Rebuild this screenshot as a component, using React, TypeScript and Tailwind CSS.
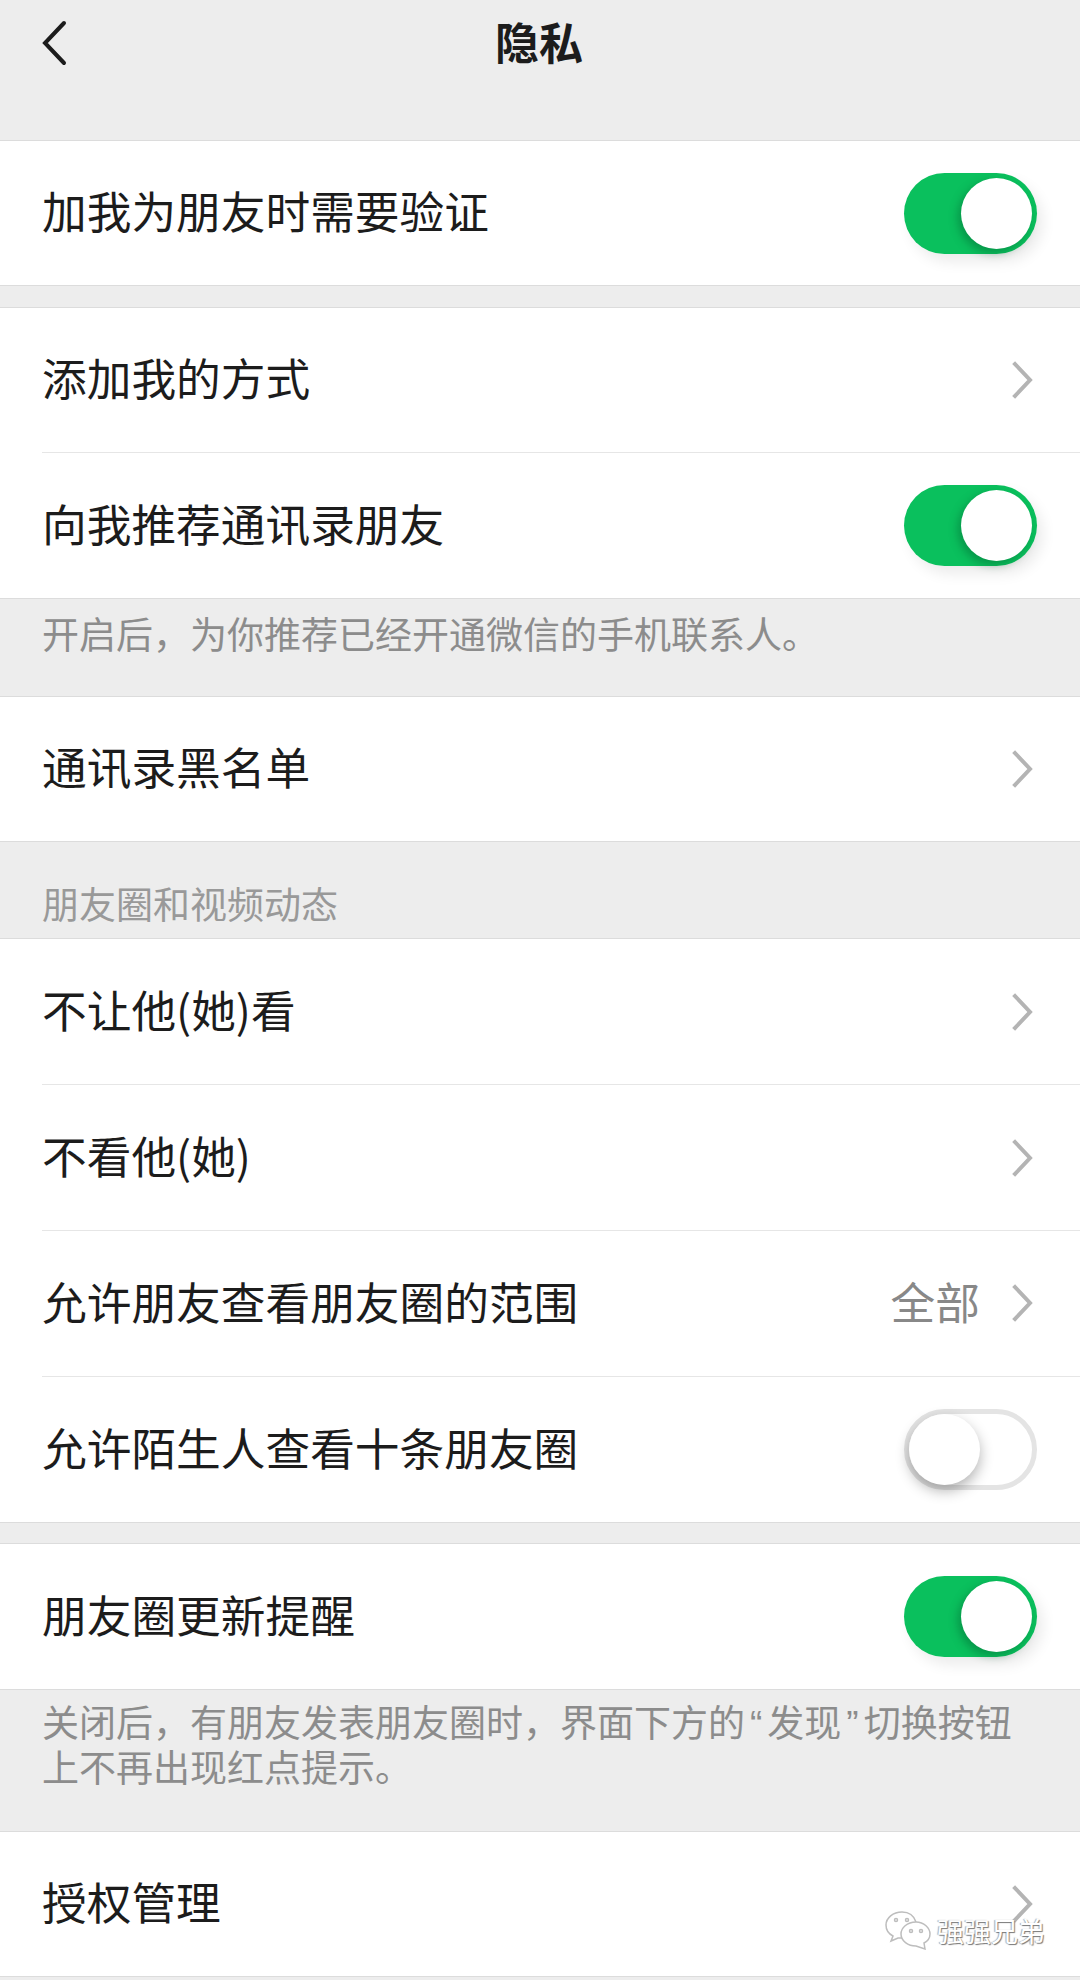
const FONT = "font-['Noto_Sans_CJK_SC','Noto_Sans',sans-serif]";

function Chevron() {
  return (
    <svg width="22" height="38" viewBox="0 0 22 38" className="block" fill="none">
      <path d="M3 3 L18 19 L3 35" stroke="#b4b4b4" strokeWidth="4" strokeLinecap="square" strokeLinejoin="miter" />
    </svg>
  );
}

function Toggle({ on }: { on: boolean }) {
  if (on) {
    return (
      <div className="relative w-[133px] h-[81px] rounded-full bg-[#0ac05d] shadow-[6px_8px_14px_rgba(0,0,0,0.08)]">
        <div className="absolute left-[57px] top-[5px] w-[71px] h-[71px] rounded-full bg-white shadow-[-3px_4px_10px_rgba(0,80,40,0.4)]" />
      </div>
    );
  }
  return (
    <div className="relative w-[133px] h-[81px] rounded-full border-[5px] border-[#e4e4e4] bg-white">
      <div className="absolute left-0 top-0 w-[71px] h-[71px] rounded-full bg-white shadow-[0_6px_14px_rgba(0,0,0,0.3)]" />
    </div>
  );
}

function Row({
  label,
  toggle,
  value,
  divider,
  height,
}: {
  label: string;
  toggle?: boolean;
  value?: string;
  divider?: boolean;
  height: string;
}) {
  return (
    <div className={`${height} pl-[42px]`}>
      <div className={`h-full flex items-center justify-between ${divider ? "border-b border-[#e6e6e6]" : ""}`}>
        <span className="text-[44.7px] leading-none text-[#1c1c1c] pb-[5px]">{label}</span>
        {toggle !== undefined ? (
          <div className="mr-[43px]">
            <Toggle on={toggle} />
          </div>
        ) : (
          <div className="flex items-center mr-[46px]">
            {value && <span className="text-[44.7px] leading-none text-[#888888] mr-[32px] pb-[5px]">{value}</span>}
            <Chevron />
          </div>
        )}
      </div>
    </div>
  );
}

function Section({ children }: { children: React.ReactNode }) {
  return <div className="bg-white border-y border-[#dcdcdc]">{children}</div>;
}

function Note({ children, className }: { children: React.ReactNode; className: string }) {
  return <div className={`px-[42px] text-[37px] leading-[45px] whitespace-nowrap ${className}`}>{children}</div>;
}

function WeChatMark() {
  return (
    <svg width="46" height="40" viewBox="0 0 46 40" fill="none" stroke="#bdbdbd" strokeWidth="1.5">
      <path d="M17 2 C8 2 1 8 1 15 C1 20 4 24 8 26 L6 31 L13 28 C15 28 16 28 18 28" fill="#fff" />
      <path d="M17 2 C24 2 29 6 31 12" />
      <path d="M31 12 C22 12 16 18 16 24 C16 31 23 36 31 36 L40 39 L39 33 C43 31 45 28 45 24 C45 18 39 12 31 12 Z" fill="#fff" />
      <circle cx="11" cy="10" r="1.5" />
      <circle cx="22" cy="10" r="1.5" />
      <circle cx="26" cy="21" r="1.5" />
      <circle cx="36" cy="21" r="1.5" />
    </svg>
  );
}

export default function App() {
  return (
    <div className={`relative w-[1080px] h-[1980px] overflow-hidden bg-[#ededed] ${FONT}`}>
      <header className="relative h-[140px]">
        <svg width="30" height="50" viewBox="0 0 30 50" fill="none" className="absolute left-[40px] top-[19px]">
          <path d="M24 4 L5 24 L24 44" stroke="#1c1c1c" strokeWidth="4" strokeLinecap="round" />
        </svg>
        <div className="pt-[17px] pr-[2px] text-center text-[44px] leading-[48px] font-bold text-[#1c1c1c]">隐私</div>
      </header>

      <Section>
        <Row label="加我为朋友时需要验证" toggle height="h-[144px]" />
      </Section>
      <div className="h-[21px]" />
      <Section>
        <Row label="添加我的方式" divider height="h-[145px]" />
        <Row label="向我推荐通讯录朋友" toggle height="h-[145px]" />
      </Section>
      <Note className="h-[97px] pt-[12px] text-[#8c8c8c]">开启后，为你推荐已经开通微信的手机联系人。</Note>
      <Section>
        <Row label="通讯录黑名单" height="h-[144px]" />
      </Section>
      <Note className="h-[96px] pt-[39px] text-[#999999]">朋友圈和视频动态</Note>
      <Section>
        <Row label="不让他(她)看" divider height="h-[146px]" />
        <Row label="不看他(她)" divider height="h-[146px]" />
        <Row label="允许朋友查看朋友圈的范围" value="全部" divider height="h-[146px]" />
        <Row label="允许陌生人查看十条朋友圈" toggle={false} height="h-[145px]" />
      </Section>
      <div className="h-[20px]" />
      <Section>
        <Row label="朋友圈更新提醒" toggle height="h-[145px]" />
      </Section>
      <Note className="h-[141px] pt-[9px] text-[#8c8c8c]">
        关闭后，有朋友发表朋友圈时，界面下方的<span className="font-['Liberation_Sans'] leading-none mx-[5px]">“</span>发现<span className="font-['Liberation_Sans'] leading-none mx-[5px]">”</span>切换按钮
        <br />
        上不再出现红点提示。
      </Note>
      <Section>
        <Row label="授权管理" height="h-[144px]" />
      </Section>

      <div className="absolute left-[885px] top-[1910px] flex items-center gap-[6px]">
        <WeChatMark />
        <span className="text-[27px] leading-none text-white [text-shadow:1px_1px_1px_#777,-1px_0_1px_#aaa]">强强兄弟</span>
      </div>
    </div>
  );
}
